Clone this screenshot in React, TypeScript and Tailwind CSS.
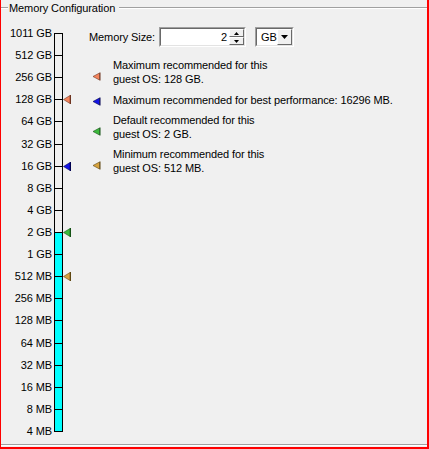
import React from 'react';

const labels = [
  '1011 GB', '512 GB', '256 GB', '128 GB', '64 GB', '32 GB', '16 GB', '8 GB', '4 GB', '2 GB',
  '1 GB', '512 MB', '256 MB', '128 MB', '64 MB', '32 MB', '16 MB', '8 MB', '4 MB',
];

const STEP = 22.11;

const markers = [
  { k: 3, fill: '#f4845c', edge: '#6e3420' },
  { k: 6, fill: '#1414e6', edge: '#000050' },
  { k: 9, fill: '#3cba3c', edge: '#145214' },
  { k: 11, fill: '#d6a23e', edge: '#5e4610' },
];

const tickY = (k: number) => Math.round(11 + STEP * k) + 0.5;

// vertical slider with tick marks and the recommended-size markers
const ScaleBar: React.FC = () => {
  const top = tickY(0);
  const bottom = tickY(labels.length - 1);
  const fillTop = tickY(9);
  return (
    <svg width="20" height="420" className="block shrink-0" shapeRendering="crispEdges">
      <rect x="2" y={fillTop} width="7" height={bottom - fillTop} fill="#00ffff" />
      <rect x="1.5" y={top} width="8" height={bottom - top} fill="none" stroke="#000" />
      {labels.map((_, k) =>
        k === 0 || k === labels.length - 1 ? null : (
          <line key={k} x1="1" x2="10" y1={tickY(k)} y2={tickY(k)} stroke="#000" />
        )
      )}
      {markers.map((m) => {
        const y = tickY(m.k) - 0.5;
        return (
          <g key={m.k} shapeRendering="auto">
            <polygon points={`10.5,${y + 0.5} 17,${y - 3.5} 17,${y + 4.5}`} fill={m.fill} stroke={m.edge} strokeWidth="0.6" />
            <line x1="17.5" x2="17.5" y1={y - 4} y2={y + 5} stroke={m.edge} />
          </g>
        );
      })}
    </svg>
  );
};

const LegendMark: React.FC<{ fill: string; edge: string }> = ({ fill, edge }) => (
  <svg width="9" height="9" className="block">
    <polygon points="1,4.5 7.5,1 7.5,8" fill={fill} stroke={edge} strokeWidth="0.6" />
    <line x1="8" x2="8" y1="0.5" y2="8.5" stroke={edge} />
  </svg>
);

const legend = [
  { lines: ['Maximum recommended for this', 'guest OS: 128 GB.'], ...markers[0] },
  { lines: ['Maximum recommended for best performance: 16296 MB.'], ...markers[1] },
  { lines: ['Default recommended for this', 'guest OS: 2 GB.'], ...markers[2] },
  { lines: ['Minimum recommended for this', 'guest OS: 512 MB.'], ...markers[3] },
];

const Etched: React.FC<{ className?: string }> = ({ className = '' }) => (
  <div className={`h-[2px] border-t border-b border-t-[#a0a0a0] border-b-white ${className}`} />
);

const SpinButton: React.FC<{ up?: boolean }> = ({ up }) => (
  <div className="flex-1 flex items-center justify-center bg-[#f0f0f0] border border-t-white border-l-white border-r-[#696969] border-b-[#696969]">
    <svg width="5" height="3" className="block">
      <polygon points={up ? '2.5,0 5,3 0,3' : '0,0 5,0 2.5,3'} fill="#000" />
    </svg>
  </div>
);

export default function App() {
  return (
    <div className="w-[429px] h-[449px] bg-[#f0f0f0] border-l border-r-2 border-b-2 border-[#ff0000] flex flex-col font-['Liberation_Sans',Arial,sans-serif] text-[11px] leading-[14px] tracking-[-0.1px] text-black">
      <div className="h-[17px] flex items-start shrink-0">
        <Etched className="w-[7px] mt-[7px]" />
        <span className="px-[1px] mt-[1px]">Memory Configuration</span>
        <Etched className="flex-1 ml-[3px] mt-[7px]" />
      </div>

      <div className="flex-1 flex">
        <div className="flex pt-[5px]">
          <div className="w-[51px] flex flex-col">
            {labels.map((l) => (
              <div key={l} className="h-[22.11px] flex items-center justify-end">
                {l}
              </div>
            ))}
          </div>
          <div className="ml-[1px]">
            <ScaleBar />
          </div>
        </div>

        <div className="ml-[16px] pt-[10px] flex flex-col">
          <div className="flex items-center h-[20px]">
            <span className="w-[70px]">Memory Size:</span>
            <div className="w-[87px] h-[20px] border border-t-[#a0a0a0] border-l-[#a0a0a0] border-r-white border-b-white">
              <div className="h-full flex items-stretch bg-white border border-t-[#696969] border-l-[#696969] border-r-[#e3e3e3] border-b-[#e3e3e3]">
                <div className="flex-1 flex items-center justify-end pr-[2px]">2</div>
                <div className="w-[15px] flex flex-col">
                  <SpinButton up />
                  <SpinButton />
                </div>
              </div>
            </div>
            <div className="ml-[9px] w-[39px] h-[20px] border border-t-[#a0a0a0] border-l-[#a0a0a0] border-r-white border-b-white">
              <div className="h-full flex items-stretch bg-white border border-t-[#696969] border-l-[#696969] border-r-[#e3e3e3] border-b-[#e3e3e3]">
                <div className="flex-1 flex items-center pl-[4px]">GB</div>
                <div className="w-[16px] flex items-center justify-center bg-[#f0f0f0] border border-t-white border-l-white border-r-[#696969] border-b-[#696969]">
                  <svg width="7" height="4" className="block">
                    <polygon points="0,0 7,0 3.5,4" fill="#000" />
                  </svg>
                </div>
              </div>
            </div>
          </div>

          <div className="mt-[11px] flex flex-col gap-[6px]">
            {legend.map((item, i) => (
              <div key={i} className={`flex items-center ${i === 0 ? 'mb-[1px]' : ''}`}>
                <div className={`w-[24px] pl-[3px] ${item.lines.length > 1 ? 'pt-[8px]' : 'pt-[2px]'}`}>
                  <LegendMark fill={item.fill} edge={item.edge} />
                </div>
                <div>
                  {item.lines.map((t) => (
                    <div key={t}>{t}</div>
                  ))}
                </div>
              </div>
            ))}
          </div>
        </div>
      </div>

      <Etched className="mb-[1px] shrink-0" />
    </div>
  );
}
